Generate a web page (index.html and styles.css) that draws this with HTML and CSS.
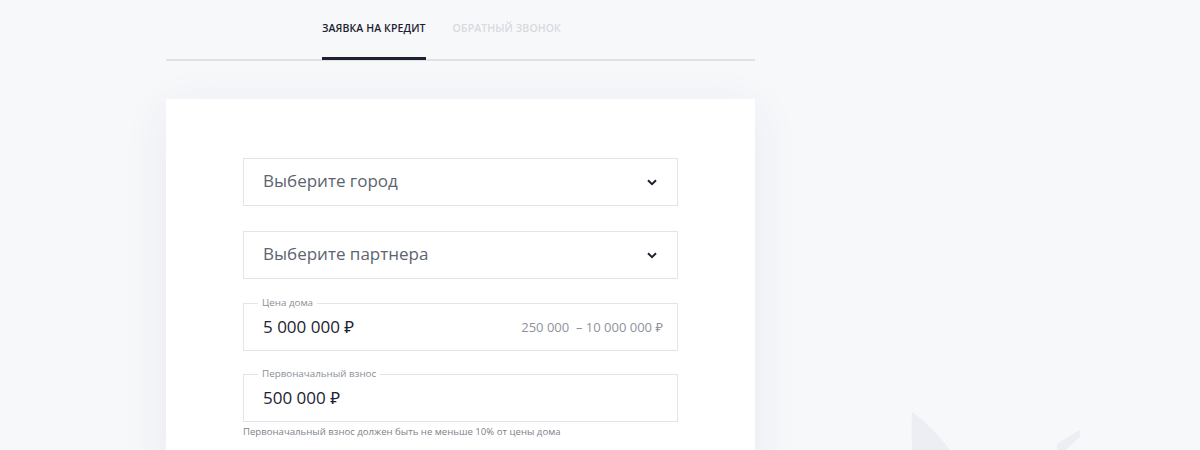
FILE: index.html
```html
<!DOCTYPE html>
<html lang="ru">
<head>
    <meta charset="UTF-8">
    <meta name="viewport" content="width=device-width, initial-scale=1.0">
    <title>Заявка на кредит</title>
    <link rel="stylesheet" href="styles.css">
</head>
<body>
    <div class="page">
        <nav class="tabs">
            <a class="tab tab-active" href="#">Заявка на кредит</a>
            <a class="tab" href="#">Обратный звонок</a>
        </nav>

        <form class="credit-card">
            <div class="select-box">
                <span class="select-text">Выберите город</span>
                <svg class="chevron" width="10" height="7" viewBox="0 0 10 7"><path d="M1 1.2l4 4 4-4" fill="none" stroke="#1c2230" stroke-width="2"/></svg>
            </div>

            <div class="select-box">
                <span class="select-text">Выберите партнера</span>
                <svg class="chevron" width="10" height="7" viewBox="0 0 10 7"><path d="M1 1.2l4 4 4-4" fill="none" stroke="#1c2230" stroke-width="2"/></svg>
            </div>

            <fieldset class="amount-box">
                <legend>Цена дома</legend>
                <span class="amount-value">5 000 000 ₽</span>
                <span class="amount-range">250 000 &nbsp;– 10 000 000 ₽</span>
            </fieldset>

            <fieldset class="amount-box amount-last">
                <legend>Первоначальный взнос</legend>
                <span class="amount-value">500 000 ₽</span>
            </fieldset>
            <p class="hint">Первоначальный взнос должен быть не меньше 10% от цены дома</p>
        </form>
    </div>

    <!-- faint background decoration -->
    <svg class="decor" width="300" height="60" viewBox="0 0 300 60">
        <path d="M32 22 Q 31 40 32 60 L 70 60 Q 52 36 32 22 Z" fill="#eceef3"/>
        <path d="M200 40 L 200 47 L 186 60 L 177 60 L 177 54 L 183 50 Z" fill="#eceef3"/>
    </svg>
</body>
</html>
```

FILE: styles.css
```css
body {
    margin: 0;
    background: #f7f8fa;
    font-family: 'Open Sans', 'Noto Sans', sans-serif;
    color: #1c2230;
    overflow: hidden;
}

.page {
    width: 589px;
    margin-left: 166px;
    position: relative;
    z-index: 1;
}

/* Tabs */
.tabs {
    display: flex;
    gap: 27px;
    padding-left: 156px;
    height: 59px;
    border-bottom: 2px solid #e1e2e6;
}

.tab {
    display: block;
    padding-top: 20px;
    height: 37px;
    line-height: 16px;
    font-size: 10.5px;
    font-weight: 600;
    letter-spacing: 0.1px;
    text-transform: uppercase;
    text-decoration: none;
    color: #d7dae0;
}

.tab-active {
    color: #1c2230;
    border-bottom: 3px solid #1c2230;
}

/* Card */
.credit-card {
    margin-top: 38px;
    background: #fff;
    padding: 59px 77px 40px;
    box-shadow: 0 10px 45px rgba(40, 60, 110, 0.07);
}

.select-box {
    display: flex;
    align-items: center;
    justify-content: space-between;
    box-sizing: border-box;
    height: 48px;
    padding: 0 20px 3px 19px;
    border: 1px solid #e3e4e7;
    margin-bottom: 25px;
}

.select-text {
    font-size: 17px;
    color: #5d6470;
}

.chevron {
    display: block;
    margin-top: 3px;
}

/* Amount fields: the legend sits on the top border */
.amount-box {
    display: flex;
    align-items: center;
    justify-content: space-between;
    box-sizing: border-box;
    height: 54px;
    min-width: 0;
    margin: -7px 0 24px;
    padding: 0 14px 6px 19px;
    border: 1px solid #e3e4e7;
}

.amount-box legend {
    padding: 0 4px;
    margin-left: -5px;
    font-size: 9.8px;
    line-height: 12px;
    color: #8a8f98;
}

.amount-value {
    font-size: 17px;
    color: #1c2230;
}

.amount-range {
    font-size: 13px;
    color: #8e939b;
}

.amount-last {
    margin-bottom: 3px;
}

.hint {
    margin: 0;
    font-size: 9.6px;
    line-height: 14px;
    color: #7d828b;
}

.decor {
    position: absolute;
    left: 880px;
    top: 390px;
}
```
